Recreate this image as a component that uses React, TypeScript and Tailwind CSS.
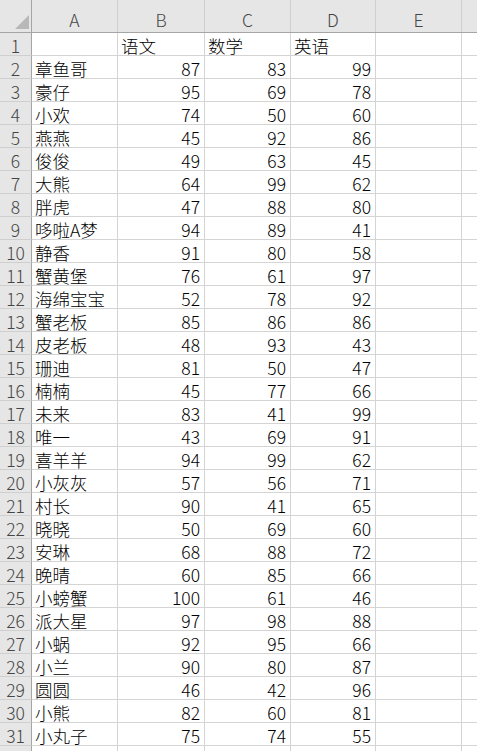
const rows: [string, number, number, number][] = [
  ['章鱼哥', 87, 83, 99],
  ['豪仔', 95, 69, 78],
  ['小欢', 74, 50, 60],
  ['燕燕', 45, 92, 86],
  ['俊俊', 49, 63, 45],
  ['大熊', 64, 99, 62],
  ['胖虎', 47, 88, 80],
  ['哆啦A梦', 94, 89, 41],
  ['静香', 91, 80, 58],
  ['蟹黄堡', 76, 61, 97],
  ['海绵宝宝', 52, 78, 92],
  ['蟹老板', 85, 86, 86],
  ['皮老板', 48, 93, 43],
  ['珊迪', 81, 50, 47],
  ['楠楠', 45, 77, 66],
  ['未来', 83, 41, 99],
  ['唯一', 43, 69, 91],
  ['喜羊羊', 94, 99, 62],
  ['小灰灰', 57, 56, 71],
  ['村长', 90, 41, 65],
  ['晓晓', 50, 69, 60],
  ['安琳', 68, 88, 72],
  ['晚晴', 60, 85, 66],
  ['小螃蟹', 100, 61, 46],
  ['派大星', 97, 98, 88],
  ['小蜗', 92, 95, 66],
  ['小兰', 90, 80, 87],
  ['圆圆', 46, 42, 96],
  ['小熊', 82, 60, 81],
  ['小丸子', 75, 74, 55],
];

const cols = 'grid grid-cols-[32px_86px_87px_86px_85px_86px_1fr]';
const cell = 'h-[23px] border-r border-b border-[#d4d4d4] flex items-end pb-[1px] overflow-hidden whitespace-nowrap';
const rowHead = 'h-[23px] bg-[#e6e6e6] border-r border-b border-r-[#a5a5a5] border-b-[#cfcfcf] flex items-end justify-center pb-[1px] text-[#444]';

export default function App() {
  return (
    <div
      className="w-[477px] h-[751px] overflow-hidden bg-white text-[17.5px] leading-none font-light text-black"
      style={{ fontFamily: '"Noto Sans CJK SC", "Noto Sans", sans-serif' }}
    >
      {/* column header */}
      <div className={`${cols} h-[33px] bg-[#e6e6e6] border-b border-[#a5a5a5] text-[#444]`}>
        <div className="relative border-r border-[#a5a5a5]">
          <svg className="absolute left-[15px] top-[15px]" width="14" height="14" viewBox="0 0 14 14">
            <polygon points="14,0 14,14 0,14" fill="#b8b8b8" />
          </svg>
        </div>
        {['A', 'B', 'C', 'D', 'E'].map((c) => (
          <div key={c} className="flex items-end justify-center pb-[4px] border-r border-[#cfcfcf]">
            {c}
          </div>
        ))}
        <div />
      </div>

      {/* row 1 */}
      <div className={cols}>
        <div className={rowHead}>1</div>
        <div className={cell} />
        <div className={`${cell} pl-[3px]`}>语文</div>
        <div className={`${cell} pl-[3px]`}>数学</div>
        <div className={`${cell} pl-[3px]`}>英语</div>
        <div className={cell} />
        <div className={`${cell} border-r-0`} />
      </div>

      {rows.map((r, i) => (
        <div key={i} className={cols}>
          <div className={rowHead}>{i + 2}</div>
          <div className={`${cell} pl-[3px]`}>{r[0]}</div>
          <div className={`${cell} justify-end pr-[4px]`}>{r[1]}</div>
          <div className={`${cell} justify-end pr-[4px]`}>{r[2]}</div>
          <div className={`${cell} justify-end pr-[4px]`}>{r[3]}</div>
          <div className={cell} />
          <div className={`${cell} border-r-0`} />
        </div>
      ))}

      <div className={cols}>
        <div className={rowHead} />
        <div className={cell} />
        <div className={cell} />
        <div className={cell} />
        <div className={cell} />
        <div className={cell} />
        <div className={`${cell} border-r-0`} />
      </div>
    </div>
  );
}
